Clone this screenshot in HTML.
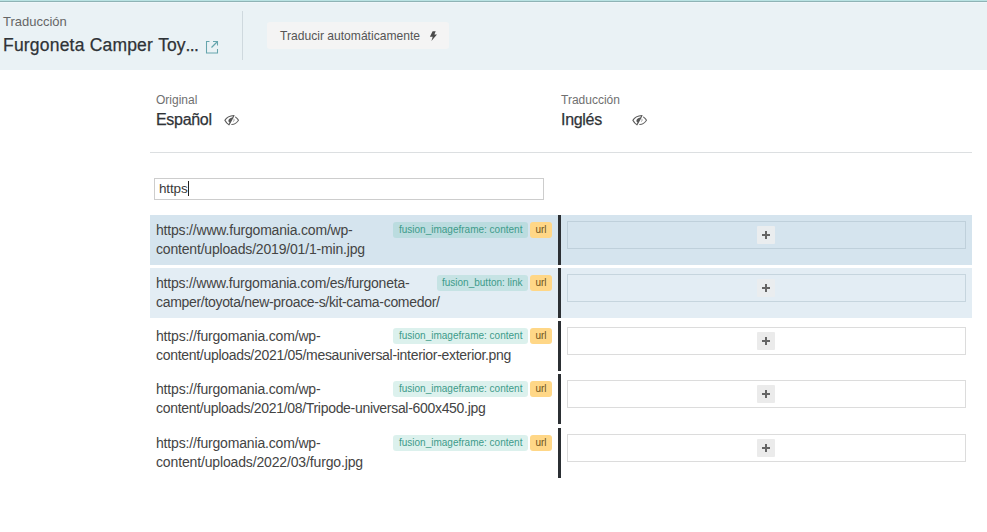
<!DOCTYPE html>
<html><head><meta charset="utf-8">
<style>
*{margin:0;padding:0;box-sizing:border-box}
html,body{width:987px;height:532px;overflow:hidden;background:#fff;font-family:"Liberation Sans",sans-serif;color:#333}
.hdr{position:absolute;left:0;top:0;width:987px;height:70px;background:#eaf2f5}
.hdr .b0{position:absolute;left:0;top:0;width:987px;height:1px;background:#b9e3e3}
.hdr .b1{position:absolute;left:0;top:1px;width:987px;height:1px;background:#8fb3b5}
.hdr .b2{position:absolute;left:0;top:2px;width:987px;height:1px;background:#eef7fa}
.abs{position:absolute;white-space:nowrap}
.lbl{font-size:13px;color:#666}
.ttl{font-size:17.5px;letter-spacing:0.2px;color:#2f3337;-webkit-text-stroke:0.25px #2f3337}
.divv{position:absolute;left:242px;top:11px;width:1px;height:49px;background:#cfd9de}
.btn{position:absolute;left:267px;top:22px;width:182px;height:27px;background:#f4f4f4;border-radius:3px}
.btn span{position:absolute;left:13px;top:7px;font-size:12.1px;color:#555}
.sub{font-size:12px;color:#707070}
.lang{font-size:16px;letter-spacing:-0.3px;color:#2f3337;-webkit-text-stroke:0.25px #2f3337}
.hline{position:absolute;left:150px;top:152px;width:822px;height:1px;background:#dcdfe1}
.search{position:absolute;left:154px;top:178px;width:390px;height:22px;border:1px solid #cdcdcd;background:#fff}
.search span{position:absolute;left:4px;top:1.5px;font-size:13.5px;letter-spacing:-0.15px;color:#3a3a3a}
.caret{position:absolute;left:33px;top:2px;width:1.2px;height:15px;background:#222}
.row{position:absolute;left:150px;width:822px;height:50px}
.row .lc{position:absolute;left:0;top:0;width:408px;height:50px}
.row .bar{position:absolute;left:408px;top:0;width:3px;height:50px;background:#2b2f33}
.row .txt{position:absolute;left:6px;top:6.4px;font-size:14px;line-height:18.7px;color:#444;white-space:nowrap}
.row .txt span{display:block}
.tag{position:absolute;top:7px;height:16px;border-radius:3px;font-size:10px;line-height:16px;white-space:nowrap}
.tg{background:rgba(95,190,175,0.22);color:#3d9b8a}
.tu{background:#ffd787;color:#6e5420;width:22px;left:380px;text-align:center}
.box{position:absolute;left:417px;top:6px;width:399px;height:28px;border:1px solid #bfd0db}
.plus{position:absolute;left:188.5px;top:3.8px;width:18.5px;height:18.5px;background:#eaedef;border-radius:1px}
.plus:before{content:"";position:absolute;left:5.5px;top:8.6px;width:7.5px;height:1.3px;background:#656565}
.plus:after{content:"";position:absolute;left:8.5px;top:5.5px;width:1.5px;height:7.5px;background:#656565}
.r1{background:#d5e4ee}
.r2{background:#e3edf4}
.r2 .box{border-color:#c6d5de}
.r0 .box{border-color:#dcdcdc}
.r0 .plus{background:#ebebeb}
</style></head><body>
<div class="hdr"><div class="b0"></div><div class="b1"></div><div class="b2"></div>
<div class="abs lbl" style="left:3px;top:14px">Traducción</div>
<div class="abs ttl" style="left:3px;top:35px">Furgoneta Camper <span style="letter-spacing:0">Toy</span><span style="letter-spacing:-0.6px">...</span></div>
<svg class="abs" style="left:205px;top:40px" width="14" height="15" viewBox="0 0 14 15" fill="none" stroke="#66a5ad" stroke-width="1.05"><path d="M4.5 1.5H1.5V13H12.5V9"/><path d="M8 1.5H12.5V5.5"/><path d="M12.5 1.5L6.5 7.5" stroke-width="1.2"/></svg>
<div class="divv"></div>
<div class="btn"><span>Traducir automáticamente</span>
<svg style="position:absolute;left:162px;top:9px" width="9" height="11" viewBox="0 0 9 11"><path d="M3.6 0.3H6.7L5.4 3.4H8L2.4 9.9L3.7 5.7H0.9Z" fill="#4a4a4a"/></svg></div>
</div>

<div class="abs sub" style="left:156px;top:93px">Original</div>
<div class="abs lang" style="left:156px;top:110.5px">Español</div>
<svg class="abs" style="left:224px;top:114px" width="16" height="13" viewBox="0 0 16 13" fill="none" stroke-linecap="round" stroke-linejoin="round"><path d="M0.9 6.2C2.5 3.5 5.5 1.8 10 1.5L5 10.8C3.3 9.8 1.8 8 0.9 6.2Z" stroke="#5a5a5a" stroke-width="1.2"/><path d="M8.9 3.6C6.6 3.6 4.4 5.2 4.4 6.8C4.4 7.9 5.2 8.6 6.1 8.8Z" fill="#555"/><path d="M11.6 3.1C12.8 4 13.8 5 14.5 6.2C13 8.5 10.5 10.3 7.8 10.5" stroke="#666" stroke-width="1.15"/><path d="M9.9 5.1C10.4 6 10.2 7 9.4 7.5" stroke="#999" stroke-width="0.9"/></svg>
<div class="abs sub" style="left:561px;top:93px">Traducción</div>
<div class="abs lang" style="left:561px;top:110.5px">Inglés</div>
<svg class="abs" style="left:632px;top:114px" width="16" height="13" viewBox="0 0 16 13" fill="none" stroke-linecap="round" stroke-linejoin="round"><path d="M0.9 6.2C2.5 3.5 5.5 1.8 10 1.5L5 10.8C3.3 9.8 1.8 8 0.9 6.2Z" stroke="#5a5a5a" stroke-width="1.2"/><path d="M8.9 3.6C6.6 3.6 4.4 5.2 4.4 6.8C4.4 7.9 5.2 8.6 6.1 8.8Z" fill="#555"/><path d="M11.6 3.1C12.8 4 13.8 5 14.5 6.2C13 8.5 10.5 10.3 7.8 10.5" stroke="#666" stroke-width="1.15"/><path d="M9.9 5.1C10.4 6 10.2 7 9.4 7.5" stroke="#999" stroke-width="0.9"/></svg>
<div class="hline"></div>
<div class="search"><span>https</span><div class="caret"></div></div>

<div class="row r1" style="top:215px"><div class="lc"></div>
<div class="txt"><span style="letter-spacing:-0.19px">https://www.furgomania.com/wp-</span><span style="letter-spacing:-0.18px">content/uploads/2019/01/1-min.jpg</span></div>
<div class="tag tg" style="left:243px;width:135px;padding-left:6px">fusion_imageframe: content</div><div class="tag tu">url</div>
<div class="bar"></div><div class="box"><div class="plus"></div></div></div>

<div class="row r2" style="top:268px"><div class="lc"></div>
<div class="txt"><span style="letter-spacing:-0.22px">https://www.furgomania.com/es/furgoneta-</span><span style="letter-spacing:-0.31px">camper/toyota/new-proace-s/kit-cama-comedor/</span></div>
<div class="tag tg" style="left:287px;width:91px;padding-left:5px">fusion_button: link</div><div class="tag tu">url</div>
<div class="bar"></div><div class="box"><div class="plus"></div></div></div>

<div class="row r0" style="top:321px"><div class="lc"></div>
<div class="txt"><span style="letter-spacing:-0.17px">https://furgomania.com/wp-</span><span style="letter-spacing:-0.30px">content/uploads/2021/05/mesauniversal-interior-exterior.png</span></div>
<div class="tag tg" style="left:243px;width:135px;padding-left:6px">fusion_imageframe: content</div><div class="tag tu">url</div>
<div class="bar"></div><div class="box"><div class="plus"></div></div></div>

<div class="row r0" style="top:374px"><div class="lc"></div>
<div class="txt"><span style="letter-spacing:-0.17px">https://furgomania.com/wp-</span><span style="letter-spacing:-0.31px">content/uploads/2021/08/Tripode-universal-600x450.jpg</span></div>
<div class="tag tg" style="left:243px;width:135px;padding-left:6px">fusion_imageframe: content</div><div class="tag tu">url</div>
<div class="bar"></div><div class="box"><div class="plus"></div></div></div>

<div class="row r0" style="top:428px"><div class="lc"></div>
<div class="txt"><span style="letter-spacing:-0.17px">https://furgomania.com/wp-</span><span style="letter-spacing:-0.145px">content/uploads/2022/03/furgo.jpg</span></div>
<div class="tag tg" style="left:243px;width:135px;padding-left:6px">fusion_imageframe: content</div><div class="tag tu">url</div>
<div class="bar"></div><div class="box"><div class="plus"></div></div></div>

</body></html>
